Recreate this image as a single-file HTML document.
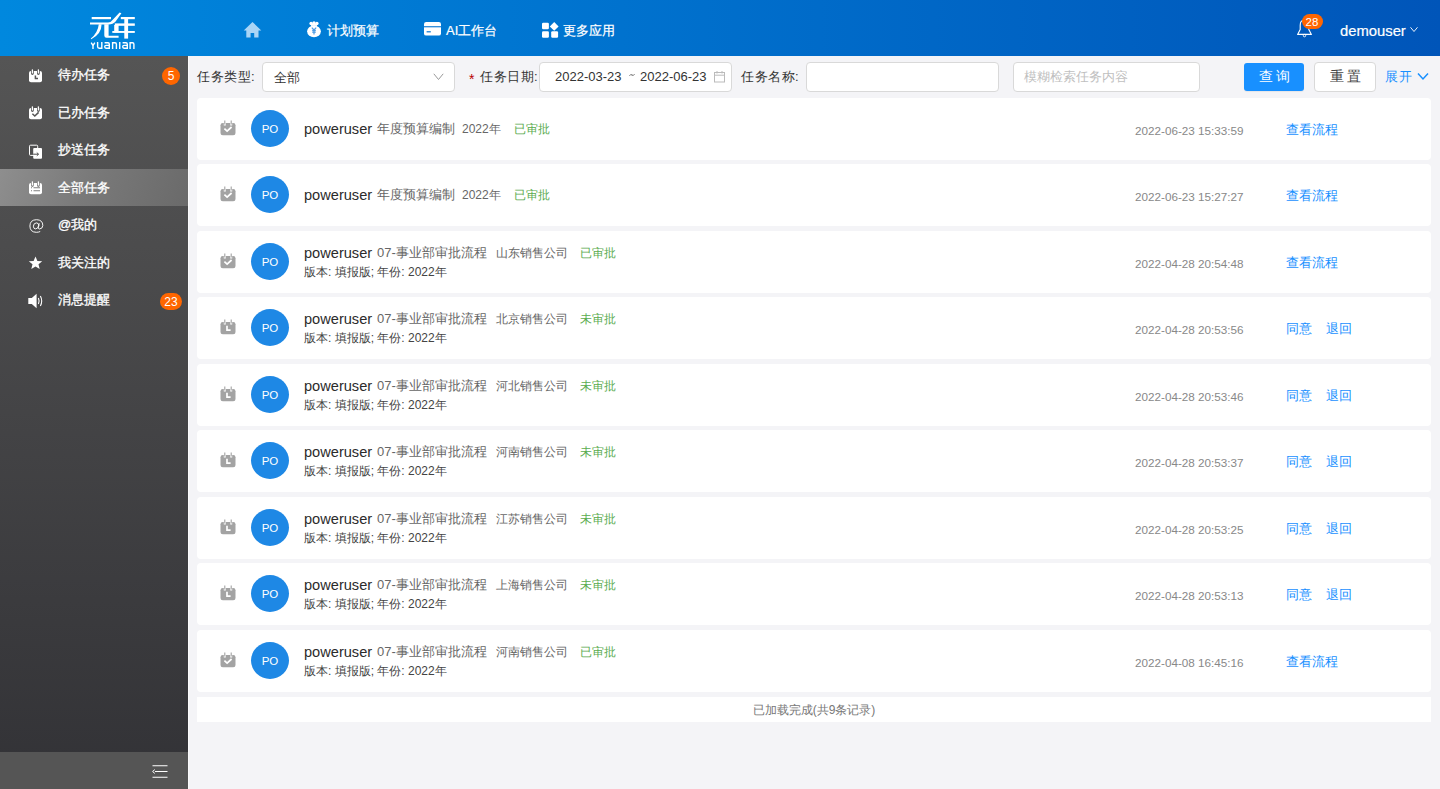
<!DOCTYPE html>
<html><head><meta charset="utf-8">
<style>
*{margin:0;padding:0;box-sizing:border-box}
html,body{width:1440px;height:789px;overflow:hidden;background:#f4f4f7;font-family:"Liberation Sans",sans-serif;}
.abs{position:absolute}
#hdr{position:absolute;left:0;top:0;width:1440px;height:56px;background:linear-gradient(90deg,#0088de 0%,#0055b9 100%)}
.nav{position:absolute;top:22.5px;color:#fff;font-size:13px;line-height:16px;white-space:nowrap;-webkit-text-stroke:0.2px #fff}
#side{position:absolute;left:0;top:56px;width:188px;height:733px;background:linear-gradient(180deg,#555555 0%,#323236 100%)}
#sideline{position:absolute;left:188px;top:56px;width:1px;height:733px;background:#fbfbfc}
.mi{position:absolute;left:0;width:188px;height:37.5px;color:#fff;font-size:13px}
.mi .t{position:absolute;left:58px;top:10px;line-height:18px;white-space:nowrap;-webkit-text-stroke:0.3px #fff}
.mi svg{position:absolute;left:28px;top:12.5px}
.badge{position:absolute;background:#ff6600;color:#fff;border-radius:10px;text-align:center;font-size:12px}
#sfoot{position:absolute;left:0;top:752px;width:188px;height:37px;background:#555}
.lbl{position:absolute;top:68px;font-size:13px;letter-spacing:0.5px;color:#333;line-height:18px;white-space:nowrap}
.inp{position:absolute;top:62px;height:30px;background:#fff;border:1px solid #d9d9d9;border-radius:4px}
.card{position:absolute;left:197px;width:1234px;height:61.5px;background:#fff;border-radius:4px}
.card .ic{position:absolute;left:23px}
.av{position:absolute;left:54px;width:38px;height:37px;border-radius:50%;background:#1e88e5;color:#fff;font-size:11.5px;text-align:center;line-height:38px}
.ttl{position:absolute;white-space:nowrap;line-height:18px}
.nm{font-size:14.6px;color:#2b2b2b}
.pr{font-size:13px;color:#666}
.co{font-size:12px;color:#666}
.st{font-size:12px;color:#5aac4f}
.sub{position:absolute;left:107px;white-space:nowrap;font-size:12px;color:#444;line-height:16px}
.dt{position:absolute;left:938px;font-size:11.7px;color:#888;white-space:nowrap;line-height:16px}
.lk{position:absolute;font-size:13px;color:#1890ff;white-space:nowrap;line-height:16px}
</style></head><body>
<div id="hdr">
  <svg class="abs" style="left:80px;top:5px" width="70" height="50" viewBox="80 5 70 50">
    <g fill="#fff">
      <rect x="91.7" y="17" width="19.3" height="2.2"/>
      <path d="M90 22.6 L108 22.6 Q111 22.6 113 19.6 L119.6 12.6 L121.4 13.2 L115.6 21.4 Q113 24.4 108.5 24.4 L90 24.4 Z"/>
      <path d="M98.8 24.3 L101.6 24.3 Q101.6 34 91.2 39.3 L90.8 38.6 Q97.8 33 98.8 24.3 Z"/>
      <path d="M104.3 24.3 L108.6 24.3 L108.6 35.7 L118.6 35.7 L118.6 37.8 L106.5 37.8 Q104.3 37.8 104.3 35.6 Z"/>
      <rect x="120.8" y="17" width="14" height="2.2"/>
      <rect x="114.8" y="23.4" width="20" height="2.4"/>
      <rect x="114.2" y="25" width="4.4" height="7.5"/>
      <rect x="112.3" y="31" width="22.5" height="1.9"/>
      <rect x="124.3" y="17" width="3.8" height="21.6"/>
    </g>
    <path fill="none" stroke="#fff" stroke-width="1.4" d="M91.2 42.6 L93 45.6 L94.8 42.6 M93 45.6 V48.9 M97.6 42.1 V46.6 Q97.6 48.2 99.2 48.2 H101.8 M101.8 42.1 V48.9 M104.6 42.8 H108 Q109.3 42.8 109.3 44.2 V48.9 M109.3 45.4 H106 Q104.7 45.4 104.7 46.8 Q104.7 48.2 106 48.2 H109.3 M112.6 48.9 V42.8 H115 Q116.4 42.8 116.4 44.2 V48.9 M119.75 42.1 V48.9 M122.6 42.8 H126 Q127.3 42.8 127.3 44.2 V48.9 M127.3 45.4 H124 Q122.7 45.4 122.7 46.8 Q122.7 48.2 124 48.2 H127.3 M130.1 48.9 V42.8 H132.5 Q133.9 42.8 133.9 44.2 V48.9"/>
  </svg>
  <!-- home -->
  <svg class="abs" style="left:243px;top:21px" width="19" height="17" viewBox="0 0 19 17"><path fill="#a9d5f6" d="M9.5 1 L18.3 9.4 L15.5 9.4 L15.5 16.4 L11.2 16.4 L11.2 12 L7.6 12 L7.6 16.4 L3.3 16.4 L3.3 9.4 L0.7 9.4 Z"/></svg>
  <!-- money bag -->
  <svg class="abs" style="left:306px;top:21px" width="16" height="17" viewBox="0 0 16 17"><g fill="#fff"><circle cx="5.1" cy="2.5" r="1.7"/><circle cx="8" cy="1.9" r="1.7"/><circle cx="10.9" cy="2.5" r="1.7"/><rect x="5" y="2.5" width="6" height="2.4"/><ellipse cx="8" cy="10.3" rx="6.9" ry="5.9"/></g><path d="M5.8 6.6 L8 8.8 L10.2 6.6 M6.2 9.4 H9.8 M6.2 11.2 H9.8 M8 8.8 V13.4" stroke="#4d9be3" stroke-width="1.2" fill="none"/></svg>
  <div class="nav" style="left:327px">计划预算</div>
  <!-- card -->
  <svg class="abs" style="left:424px;top:22px" width="18" height="14" viewBox="0 0 18 14"><rect x="0" y="0" width="17" height="13.6" rx="2.2" fill="#fff"/><rect x="0" y="4.2" width="17" height="1.1" fill="#0676d3"/><rect x="2.6" y="9.2" width="4.2" height="1.2" fill="#0676d3"/></svg>
  <div class="nav" style="left:446px">AI工作台</div>
  <!-- grid -->
  <svg class="abs" style="left:542px;top:22px" width="17" height="16" viewBox="0 0 17 16"><g fill="#fff"><rect x="0" y="0.7" width="6.9" height="6.6" rx="1.2"/><rect x="0" y="9.2" width="6.9" height="6.6" rx="1.2"/><rect x="9.2" y="9.2" width="6.9" height="6.6" rx="1.2"/><path d="M12.2 0 L16.6 4.4 L12.2 8.8 L7.8 4.4 Z"/></g></svg>
  <div class="nav" style="left:563px">更多应用</div>
  <!-- bell -->
  <svg class="abs" style="left:1296px;top:17px" width="18" height="21" viewBox="0 0 18 21"><path d="M1.6 17.4 L15.4 17.4 L12.8 12.4 L12.8 8.2 Q12.8 3 8.5 3 Q4.2 3 4.2 8.2 L4.2 12.4 Z" fill="none" stroke="#fff" stroke-width="1.1" stroke-linejoin="round"/><circle cx="8.5" cy="18.6" r="1.2" fill="none" stroke="#fff" stroke-width="0.9"/></svg>
  <div class="badge" style="left:1301.5px;top:14px;width:21px;height:15px;line-height:16px;font-size:11.5px">28</div>
  <div class="nav" style="left:1340px;top:22px;font-size:14.8px;line-height:18px">demouser</div>
  <svg class="abs" style="left:1409px;top:26px" width="10" height="7" viewBox="0 0 10 7"><path d="M1.5 1.3 L5 5.5 L8.5 1.3" fill="none" stroke="#fff" stroke-width="0.9"/></svg>
</div>

<div id="side">
  <div class="mi" style="top:0">
    <svg width="15" height="14" viewBox="0 0 15 14"><rect x="1" y="2" width="13" height="11.3" rx="2" fill="#fff"/><path d="M4.4 2.2 V4.6 M10.4 2.2 V4.6" stroke="#555" stroke-width="2.8" stroke-linecap="round"/><path d="M4.4 0.8 V3.9 M10.4 0.8 V3.9" stroke="#fff" stroke-width="1.3" stroke-linecap="round"/><path d="M7.4 6.6 V9.4 H10" stroke="#555" stroke-width="1.5" fill="none"/></svg>
    <div class="t">待办任务</div>
    <div class="badge" style="left:162px;top:11px;width:18px;height:18px;border-radius:9px;line-height:19px">5</div>
  </div>
  <div class="mi" style="top:37.5px">
    <svg width="15" height="14" viewBox="0 0 15 14"><rect x="1" y="2" width="13" height="11.3" rx="2" fill="#fff"/><path d="M4.4 2.2 V4.6 M10.4 2.2 V4.6" stroke="#555" stroke-width="2.8" stroke-linecap="round"/><path d="M4.4 0.8 V3.9 M10.4 0.8 V3.9" stroke="#fff" stroke-width="1.3" stroke-linecap="round"/><path d="M4.4 7.8 L6.8 10 L10.6 6.4" stroke="#555" stroke-width="1.5" fill="none"/></svg>
    <div class="t">已办任务</div>
  </div>
  <div class="mi" style="top:75px">
    <svg width="15" height="15" viewBox="0 0 15 15"><rect x="1.5" y="1.2" width="8.2" height="10.2" rx="1" fill="none" stroke="#fff" stroke-width="1"/><rect x="5.2" y="4" width="8.8" height="10.8" rx="1" fill="#fff"/><path d="M5.2 10.2 H10.5 M8.8 8.6 L10.5 10.2 L8.8 11.8" stroke="#4e4e4e" stroke-width="1" fill="none"/></svg>
    <div class="t">抄送任务</div>
  </div>
  <div class="abs" style="left:0;top:112.5px;width:188px;height:37.5px;background:linear-gradient(110deg,#8e8e8e 0%,#7a7a7a 45%,#6a6a6a 100%)"></div>
  <div class="mi" style="top:112.5px">
    <svg width="15" height="14" viewBox="0 0 15 14"><rect x="1" y="2" width="13" height="11.3" rx="2" fill="#fff"/><path d="M4.4 2.2 V4.6 M10.4 2.2 V4.6" stroke="#7f7f7f" stroke-width="2.8" stroke-linecap="round"/><path d="M4.4 0.8 V3.9 M10.4 0.8 V3.9" stroke="#fff" stroke-width="1.3" stroke-linecap="round"/><path d="M3 6.8 H4 M5.5 6.8 H12 M3 9.8 H4 M5.5 9.8 H12" stroke="#7f7f7f" stroke-width="1.1"/></svg>
    <div class="t">全部任务</div>
  </div>
  <div class="mi" style="top:150px">
    <svg width="15" height="14" viewBox="0 0 15 14" style="top:13px;left:28.5px"><path d="M10.2 4.2 L9.4 8.6 Q9.2 10 10.4 10 Q13.6 9.8 13.8 6.6 Q13.8 0.8 7.5 0.7 Q1 0.8 0.9 7 Q1 13.2 7.3 13.3 Q9.6 13.3 11.2 12.5" fill="none" stroke="#fff" stroke-width="0.95"/><path d="M9.8 6.2 Q9.4 3.9 7.4 3.9 Q4.6 4 4.4 7.2 Q4.4 9.9 6.6 9.9 Q9.2 9.8 9.8 6.2" fill="none" stroke="#fff" stroke-width="0.95"/></svg>
    <div class="t">@我的</div>
  </div>
  <div class="mi" style="top:187.5px">
    <svg width="15" height="14" viewBox="0 0 15 14"><path fill="#fff" d="M7.5 0.5 L9.4 4.9 L14.2 5.2 L10.5 8.3 L11.7 13 L7.5 10.4 L3.3 13 L4.5 8.3 L0.8 5.2 L5.6 4.9 Z"/></svg>
    <div class="t">我关注的</div>
  </div>
  <div class="mi" style="top:225px">
    <svg width="16" height="16" viewBox="0 0 16 16" style="top:12px"><path fill="#fff" d="M0.3 5 H3.8 L8.6 0.8 V15.2 L3.8 11 H0.3 Z"/><path d="M10.4 5 Q11.8 8 10.4 11 M12.4 3 Q15 8 12.4 13" stroke="#fff" stroke-width="1.1" fill="none"/></svg>
    <div class="t">消息提醒</div>
    <div class="badge" style="left:160px;top:11.5px;width:22px;height:17px;border-radius:9px;line-height:18px">23</div>
  </div>
</div>
<div id="sideline"></div>
<div id="sfoot">
  <svg class="abs" style="left:151px;top:13px" width="17" height="13" viewBox="0 0 17 13"><path d="M1.5 0.8 H16.5 M4 6.5 H16.5 M1.5 12.2 H16.5" stroke="#fff" stroke-width="1.1"/><path d="M3.8 4.6 L1.6 6.5 L3.8 8.4" stroke="#fff" stroke-width="1" fill="none"/></svg>
</div>

<!-- filter bar -->
<div class="lbl" style="left:197px">任务类型:</div>
<div class="inp" style="left:262px;width:193px"><div class="abs" style="left:11px;top:5.5px;font-size:13px;letter-spacing:0.3px;color:#333;line-height:18px">全部</div>
<svg class="abs" style="left:170px;top:10px" width="11" height="8" viewBox="0 0 11 8"><path d="M0.8 0.8 L5.5 6.5 L10.2 0.8" stroke="#999" stroke-width="1" fill="none"/></svg></div>
<div class="lbl" style="left:469px;top:70px;color:#b80000;font-size:14px">*</div>
<div class="lbl" style="left:480px">任务日期:</div>
<div class="inp" style="left:539px;width:193px"><div class="abs" style="left:15px;top:6px;font-size:13px;color:#333;line-height:16px;white-space:nowrap">2022-03-23</div><svg class="abs" style="left:89px;top:10px" width="6" height="4" viewBox="0 0 6 4"><path d="M0.5 2.8 Q1.6 0.8 3 2 Q4.4 3.2 5.5 1.2" stroke="#555" stroke-width="0.9" fill="none"/></svg><div class="abs" style="left:100px;top:6px;font-size:13px;color:#333;line-height:16px;white-space:nowrap">2022-06-23</div>
<svg class="abs" style="left:174px;top:8px" width="12" height="12" viewBox="0 0 12 12"><rect x="0.5" y="1.5" width="10" height="9.5" fill="none" stroke="#bbb" stroke-width="1"/><path d="M0.5 4.2 H10.5 M3 0 V2.5 M8 0 V2.5" stroke="#bbb" stroke-width="1"/></svg></div>
<div class="lbl" style="left:741px">任务名称:</div>
<div class="inp" style="left:806px;width:193px"></div>
<div class="inp" style="left:1013px;width:187px"><div class="abs" style="left:10px;top:6px;font-size:13px;color:#bfbfbf;line-height:16px;white-space:nowrap">模糊检索任务内容</div></div>
<div class="abs" style="left:1244px;top:63px;width:60px;height:28px;background:#1890ff;border-radius:3px;box-shadow:0 1px 1px rgba(0,0,0,0.06);color:#fff;font-size:13.5px;line-height:28px;text-indent:4px;text-align:center;letter-spacing:3.5px">查询</div>
<div class="inp" style="left:1314px;width:62px;color:#444;font-size:13.5px;line-height:28px;text-indent:4px;text-align:center;letter-spacing:3.5px">重置</div>
<div class="abs" style="left:1385px;top:68px;font-size:13px;letter-spacing:0.5px;color:#1890ff;line-height:18px">展开</div>
<svg class="abs" style="left:1417px;top:72px" width="12" height="9" viewBox="0 0 12 9"><path d="M1 1.5 L6 7 L11 1.5" stroke="#1890ff" stroke-width="1.5" fill="none"/></svg>

<div id="cards"><div class="card" style="top:98px"><svg class="ic" style="top:21.5px" width="16" height="16" viewBox="0 0 16 16"><rect x="0.5" y="3" width="15" height="12.3" rx="2.3" fill="#a3a3a3"/><path d="M4.8 0.4 V5.4 M11.2 0.4 V5.4" stroke="#fff" stroke-width="2"/><path d="M4.8 0.6 V4.4 M11.2 0.6 V4.4" stroke="#a3a3a3" stroke-width="1.1"/><path d="M4.4 8.6 L7.1 11.1 L11.6 7" stroke="#fff" stroke-width="1.7" fill="none"/></svg><div class="av" style="top:11.5px">PO</div><div class="ttl nm" style="left:107px;top:22px">poweruser</div><div class="ttl pr" style="left:180px;top:22px">年度预算编制</div><div class="ttl co" style="left:265px;top:22px">2022年</div><div class="ttl st" style="left:317px;top:22px">已审批</div><div class="dt" style="top:25px">2022-06-23 15:33:59</div><div class="lk" style="left:1089px;top:23.5px">查看流程</div></div>
<div class="card" style="top:164px"><svg class="ic" style="top:21.5px" width="16" height="16" viewBox="0 0 16 16"><rect x="0.5" y="3" width="15" height="12.3" rx="2.3" fill="#a3a3a3"/><path d="M4.8 0.4 V5.4 M11.2 0.4 V5.4" stroke="#fff" stroke-width="2"/><path d="M4.8 0.6 V4.4 M11.2 0.6 V4.4" stroke="#a3a3a3" stroke-width="1.1"/><path d="M4.4 8.6 L7.1 11.1 L11.6 7" stroke="#fff" stroke-width="1.7" fill="none"/></svg><div class="av" style="top:11.5px">PO</div><div class="ttl nm" style="left:107px;top:22px">poweruser</div><div class="ttl pr" style="left:180px;top:22px">年度预算编制</div><div class="ttl co" style="left:265px;top:22px">2022年</div><div class="ttl st" style="left:317px;top:22px">已审批</div><div class="dt" style="top:25px">2022-06-23 15:27:27</div><div class="lk" style="left:1089px;top:23.5px">查看流程</div></div>
<div class="card" style="top:231px"><svg class="ic" style="top:21.5px" width="16" height="16" viewBox="0 0 16 16"><rect x="0.5" y="3" width="15" height="12.3" rx="2.3" fill="#a3a3a3"/><path d="M4.8 0.4 V5.4 M11.2 0.4 V5.4" stroke="#fff" stroke-width="2"/><path d="M4.8 0.6 V4.4 M11.2 0.6 V4.4" stroke="#a3a3a3" stroke-width="1.1"/><path d="M4.4 8.6 L7.1 11.1 L11.6 7" stroke="#fff" stroke-width="1.7" fill="none"/></svg><div class="av" style="top:11.5px">PO</div><div class="ttl nm" style="left:107px;top:13px">poweruser</div><div class="ttl pr" style="left:180px;top:13px">07-事业部审批流程</div><div class="ttl co" style="left:298.5px;top:13px">山东销售公司</div><div class="ttl st" style="left:383px;top:13px">已审批</div><div class="sub" style="top:33px">版本: 填报版; 年份: 2022年</div><div class="dt" style="top:25px">2022-04-28 20:54:48</div><div class="lk" style="left:1089px;top:23.5px">查看流程</div></div>
<div class="card" style="top:297px"><svg class="ic" style="top:21.5px" width="16" height="16" viewBox="0 0 16 16"><rect x="0.5" y="3" width="15" height="12.3" rx="2.3" fill="#a3a3a3"/><path d="M4.8 0.4 V5.4 M11.2 0.4 V5.4" stroke="#fff" stroke-width="2"/><path d="M4.8 0.6 V4.4 M11.2 0.6 V4.4" stroke="#a3a3a3" stroke-width="1.1"/><path d="M7 6.8 V11.2 H10.6" stroke="#fff" stroke-width="1.7" fill="none"/></svg><div class="av" style="top:11.5px">PO</div><div class="ttl nm" style="left:107px;top:13px">poweruser</div><div class="ttl pr" style="left:180px;top:13px">07-事业部审批流程</div><div class="ttl co" style="left:298.5px;top:13px">北京销售公司</div><div class="ttl st" style="left:383px;top:13px">未审批</div><div class="sub" style="top:33px">版本: 填报版; 年份: 2022年</div><div class="dt" style="top:25px">2022-04-28 20:53:56</div><div class="lk" style="left:1089px;top:23.5px">同意</div><div class="lk" style="left:1129px;top:23.5px">退回</div></div>
<div class="card" style="top:364px"><svg class="ic" style="top:21.5px" width="16" height="16" viewBox="0 0 16 16"><rect x="0.5" y="3" width="15" height="12.3" rx="2.3" fill="#a3a3a3"/><path d="M4.8 0.4 V5.4 M11.2 0.4 V5.4" stroke="#fff" stroke-width="2"/><path d="M4.8 0.6 V4.4 M11.2 0.6 V4.4" stroke="#a3a3a3" stroke-width="1.1"/><path d="M7 6.8 V11.2 H10.6" stroke="#fff" stroke-width="1.7" fill="none"/></svg><div class="av" style="top:11.5px">PO</div><div class="ttl nm" style="left:107px;top:13px">poweruser</div><div class="ttl pr" style="left:180px;top:13px">07-事业部审批流程</div><div class="ttl co" style="left:298.5px;top:13px">河北销售公司</div><div class="ttl st" style="left:383px;top:13px">未审批</div><div class="sub" style="top:33px">版本: 填报版; 年份: 2022年</div><div class="dt" style="top:25px">2022-04-28 20:53:46</div><div class="lk" style="left:1089px;top:23.5px">同意</div><div class="lk" style="left:1129px;top:23.5px">退回</div></div>
<div class="card" style="top:430px"><svg class="ic" style="top:21.5px" width="16" height="16" viewBox="0 0 16 16"><rect x="0.5" y="3" width="15" height="12.3" rx="2.3" fill="#a3a3a3"/><path d="M4.8 0.4 V5.4 M11.2 0.4 V5.4" stroke="#fff" stroke-width="2"/><path d="M4.8 0.6 V4.4 M11.2 0.6 V4.4" stroke="#a3a3a3" stroke-width="1.1"/><path d="M7 6.8 V11.2 H10.6" stroke="#fff" stroke-width="1.7" fill="none"/></svg><div class="av" style="top:11.5px">PO</div><div class="ttl nm" style="left:107px;top:13px">poweruser</div><div class="ttl pr" style="left:180px;top:13px">07-事业部审批流程</div><div class="ttl co" style="left:298.5px;top:13px">河南销售公司</div><div class="ttl st" style="left:383px;top:13px">未审批</div><div class="sub" style="top:33px">版本: 填报版; 年份: 2022年</div><div class="dt" style="top:25px">2022-04-28 20:53:37</div><div class="lk" style="left:1089px;top:23.5px">同意</div><div class="lk" style="left:1129px;top:23.5px">退回</div></div>
<div class="card" style="top:497px"><svg class="ic" style="top:21.5px" width="16" height="16" viewBox="0 0 16 16"><rect x="0.5" y="3" width="15" height="12.3" rx="2.3" fill="#a3a3a3"/><path d="M4.8 0.4 V5.4 M11.2 0.4 V5.4" stroke="#fff" stroke-width="2"/><path d="M4.8 0.6 V4.4 M11.2 0.6 V4.4" stroke="#a3a3a3" stroke-width="1.1"/><path d="M7 6.8 V11.2 H10.6" stroke="#fff" stroke-width="1.7" fill="none"/></svg><div class="av" style="top:11.5px">PO</div><div class="ttl nm" style="left:107px;top:13px">poweruser</div><div class="ttl pr" style="left:180px;top:13px">07-事业部审批流程</div><div class="ttl co" style="left:298.5px;top:13px">江苏销售公司</div><div class="ttl st" style="left:383px;top:13px">未审批</div><div class="sub" style="top:33px">版本: 填报版; 年份: 2022年</div><div class="dt" style="top:25px">2022-04-28 20:53:25</div><div class="lk" style="left:1089px;top:23.5px">同意</div><div class="lk" style="left:1129px;top:23.5px">退回</div></div>
<div class="card" style="top:563px"><svg class="ic" style="top:21.5px" width="16" height="16" viewBox="0 0 16 16"><rect x="0.5" y="3" width="15" height="12.3" rx="2.3" fill="#a3a3a3"/><path d="M4.8 0.4 V5.4 M11.2 0.4 V5.4" stroke="#fff" stroke-width="2"/><path d="M4.8 0.6 V4.4 M11.2 0.6 V4.4" stroke="#a3a3a3" stroke-width="1.1"/><path d="M7 6.8 V11.2 H10.6" stroke="#fff" stroke-width="1.7" fill="none"/></svg><div class="av" style="top:11.5px">PO</div><div class="ttl nm" style="left:107px;top:13px">poweruser</div><div class="ttl pr" style="left:180px;top:13px">07-事业部审批流程</div><div class="ttl co" style="left:298.5px;top:13px">上海销售公司</div><div class="ttl st" style="left:383px;top:13px">未审批</div><div class="sub" style="top:33px">版本: 填报版; 年份: 2022年</div><div class="dt" style="top:25px">2022-04-28 20:53:13</div><div class="lk" style="left:1089px;top:23.5px">同意</div><div class="lk" style="left:1129px;top:23.5px">退回</div></div>
<div class="card" style="top:630px"><svg class="ic" style="top:21.5px" width="16" height="16" viewBox="0 0 16 16"><rect x="0.5" y="3" width="15" height="12.3" rx="2.3" fill="#a3a3a3"/><path d="M4.8 0.4 V5.4 M11.2 0.4 V5.4" stroke="#fff" stroke-width="2"/><path d="M4.8 0.6 V4.4 M11.2 0.6 V4.4" stroke="#a3a3a3" stroke-width="1.1"/><path d="M4.4 8.6 L7.1 11.1 L11.6 7" stroke="#fff" stroke-width="1.7" fill="none"/></svg><div class="av" style="top:11.5px">PO</div><div class="ttl nm" style="left:107px;top:13px">poweruser</div><div class="ttl pr" style="left:180px;top:13px">07-事业部审批流程</div><div class="ttl co" style="left:298.5px;top:13px">河南销售公司</div><div class="ttl st" style="left:383px;top:13px">已审批</div><div class="sub" style="top:33px">版本: 填报版; 年份: 2022年</div><div class="dt" style="top:25px">2022-04-08 16:45:16</div><div class="lk" style="left:1089px;top:23.5px">查看流程</div></div></div><!--/cards-->
<div class="abs" style="left:197px;top:697px;width:1234px;height:25px;background:#fff;text-align:center;font-size:12px;color:#777;line-height:26px">已加载完成(共9条记录)</div>
</body></html>
